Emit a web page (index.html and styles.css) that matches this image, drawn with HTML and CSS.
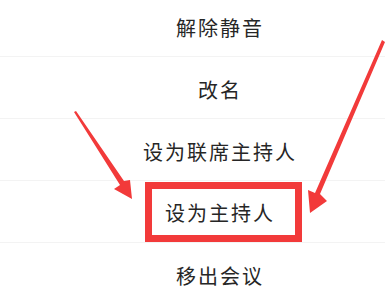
FILE: index.html
```html
<!DOCTYPE html>
<html>
<head>
  <title>成员操作</title>
  <link rel="stylesheet" href="styles.css">
</head>
<body>
  <div class="sheet">
    <ul class="menu">
      <li class="menu-item">解除静音</li>
      <li class="menu-item">改名</li>
      <li class="menu-item">设为联席主持人</li>
      <li class="menu-item"><span class="highlight">设为主持人</span></li>
      <li class="menu-item">移出会议</li>
    </ul>

    <svg class="arrows" width="385" height="303" viewBox="0 0 385 303">
      <!-- left arrow -->
      <polygon points="74,112 76,111 124,181 130,180 132,199 114,189 120,185" fill="#f23a3a"/>
      <!-- right arrow -->
      <polygon points="382,40 385,42 320,194 327,201 310,213 308,190 315,193" fill="#f23a3a"/>
    </svg>
  </div>
</body>
</html>
```

FILE: styles.css
```css
body {
  margin: 0;
  background-color: #fff;
}

.sheet {
  position: relative;
  width: 385px;
  height: 303px;
  overflow: hidden;
}

.menu {
  list-style: none;
  margin: -5px 0 0 0;
  padding: 0;
}

.menu-item {
  display: flex;
  align-items: center;
  justify-content: center;
  height: 62px;
  padding-left: 55px;
  padding-top: 3px;
  box-sizing: border-box;
  border-bottom: 1px solid #f3f3f3;
  font-family: "Noto Sans CJK SC", sans-serif;
  font-size: 20px;
  letter-spacing: 2px;
  color: #262626;
}

.highlight {
  display: inline-flex;
  align-items: center;
  height: 60px;
  margin-top: -2px;
  margin-left: 7px;
  padding: 0 20px 0 13px;
  box-sizing: border-box;
  border: 7px solid #f23a3a;
}

.arrows {
  position: absolute;
  top: 0;
  left: 0;
}
```
